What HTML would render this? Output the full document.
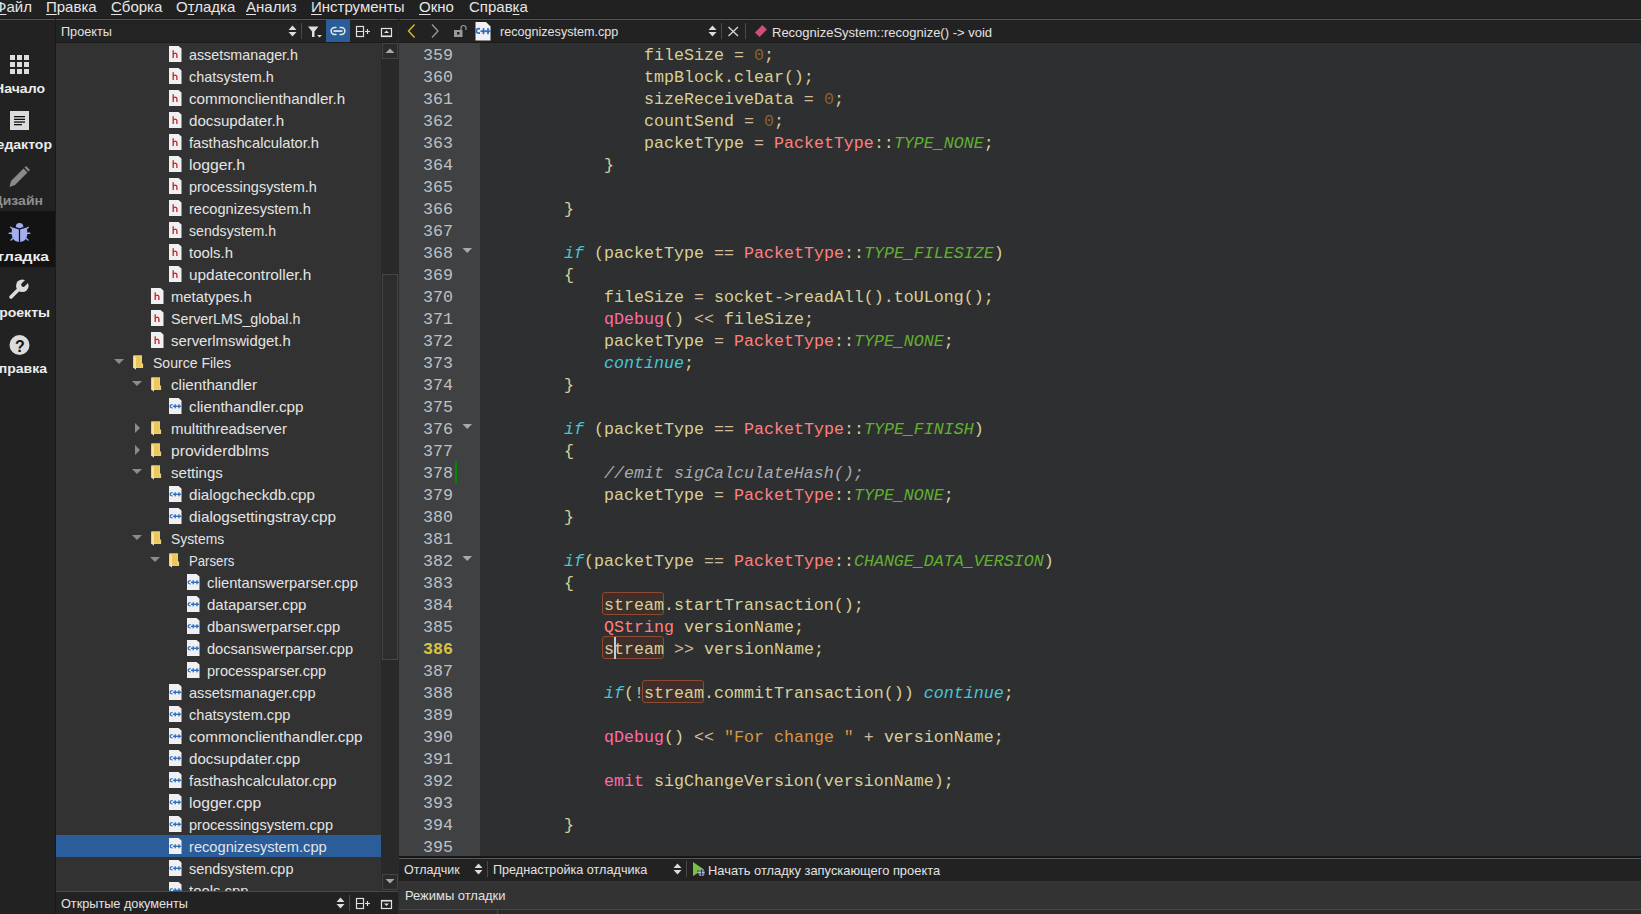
<!DOCTYPE html><html><head><meta charset="utf-8"><style>
*{margin:0;padding:0;box-sizing:border-box}
html,body{width:1641px;height:914px;overflow:hidden;background:#212121;font-family:"Liberation Sans",sans-serif;color:#e0e0e0;position:relative}
.a{position:absolute}
.ui{font-size:12.7px;color:#e2e2e2;white-space:nowrap;line-height:15px}
.menu span{position:absolute;top:-2px;font-size:15px;line-height:18px;color:#e6e6e6;white-space:nowrap}
.menu u{text-decoration:underline;text-decoration-thickness:1px;text-underline-offset:1.5px}
.mlabel{position:absolute;font-weight:bold;font-size:13px;line-height:15px;color:#ececec;white-space:nowrap;text-align:right;width:100px;transform:scaleX(1.08);transform-origin:100% 50%}
.row{position:absolute;left:0;width:325px;height:22px;font-size:14.6px;color:#e4e4e4;white-space:nowrap}
.row .t{position:absolute;top:4px;line-height:17px}
#code,#lnums{font-family:"Liberation Mono",monospace;font-size:16.667px;line-height:22px;white-space:pre}
#code{position:absolute;left:85px;top:2px;color:#d6cf9a}
#lnums{position:absolute;left:0;top:2px;width:54px;text-align:right;color:#bec0c2}
.f{color:#d6cf9a}
.op{color:#d6bb9a}
.n{color:#8a602c}
.ty{color:#ff8080}
.en{color:#62b032;font-style:italic}
.kw{color:#45c6d6;font-style:italic}
.mc{color:#ff6aad}
.st{color:#d69545}
.cm{color:#a8abb0;font-style:italic}
.occ{position:absolute;border:1px solid #8c4a33;background:#3f2f2b;border-radius:3px}
</style></head><body><div class="a menu" style="left:0;top:0;width:1641px;height:19px;background:#212121">
<span style="left:-5px"><u>Ф</u>айл</span>
<span style="left:46px"><u>П</u>равка</span>
<span style="left:111px"><u>С</u>борка</span>
<span style="left:176px">О<u>т</u>ладка</span>
<span style="left:246px"><u>А</u>нализ</span>
<span style="left:311px"><u>И</u>нструменты</span>
<span style="left:419px"><u>О</u>кно</span>
<span style="left:469px">Справ<u>к</u>а</span>
</div>
<div class="a" style="left:0;top:20px;width:55px;height:894px;background:#222222"></div>
<div class="a" style="left:55px;top:20px;width:1px;height:894px;background:#1a1a1a"></div>
<div class="a" style="left:0;top:211px;width:55px;height:56px;background:#131313"></div>
<div class="mlabel" style="top:81px;left:-55px;color:#ececec;transform:scaleX(1.08)">Начало</div>
<div class="mlabel" style="top:137px;left:-48px;color:#ececec;transform:scaleX(1.08)">Редактор</div>
<div class="mlabel" style="top:193px;left:-57px;color:#8e8e8e;transform:scaleX(1.08)">Дизайн</div>
<div class="mlabel" style="top:249px;left:-51.4px;color:#ececec;transform:scaleX(1.2)">Отладка</div>
<div class="mlabel" style="top:305px;left:-50px;color:#ececec;transform:scaleX(1.08)">Проекты</div>
<div class="mlabel" style="top:361px;left:-52.7px;color:#ececec;transform:scaleX(1.08)">Справка</div>
<svg class="a" style="left:0;top:0" width="56" height="400"><rect x="10" y="55" width="5" height="5" fill="#dedede"/><rect x="17" y="55" width="5" height="5" fill="#dedede"/><rect x="24" y="55" width="5" height="5" fill="#dedede"/><rect x="10" y="62" width="5" height="5" fill="#dedede"/><rect x="17" y="62" width="5" height="5" fill="#dedede"/><rect x="24" y="62" width="5" height="5" fill="#dedede"/><rect x="10" y="69" width="5" height="5" fill="#dedede"/><rect x="17" y="69" width="5" height="5" fill="#dedede"/><rect x="24" y="69" width="5" height="5" fill="#dedede"/><rect x="10" y="111" width="19" height="19" fill="#dcdcdc"/><rect x="14" y="116" width="11" height="1.3" fill="#111"/><rect x="14" y="118.7" width="11" height="1.3" fill="#111"/><rect x="14" y="121.4" width="11" height="1.3" fill="#111"/><rect x="14" y="124" width="8" height="1.3" fill="#111"/><path d="M9.5 187 L11 181 L23.5 168.5 L27.5 172.5 L15 185 Z" fill="#8a8a8a"/><path d="M24.5 167.5 L26 166 L30 170 L28.5 171.5 Z" fill="#8a8a8a"/><path d="M15.8 227 Q15.8 223 19.5 223 Q23.3 223 23.3 227 L19.5 228.3 Z" fill="#a3aef0"/><path d="M12.6 227.6 L18.9 229.6 L18.9 242 Q12.3 241 11.7 234.5 Q11.6 229 12.6 227.6 Z" fill="#a3aef0"/><path d="M26.4 227.6 L20.1 229.6 L20.1 242 Q26.7 241 27.3 234.5 Q27.4 229 26.4 227.6 Z" fill="#a3aef0"/><path d="M10.8 227.2 L13 229.3 M9.2 233.3 L12.5 233.3 M11 240 L13.3 238 M28.2 227.2 L26 229.3 M29.8 233.3 L26.5 233.3 M28 240 L25.7 238" stroke="#a3aef0" stroke-width="1.4" stroke-linecap="round"/><path d="M11 297 L19 289" stroke="#dcdcdc" stroke-width="3.6" stroke-linecap="round"/><circle cx="22.3" cy="285.7" r="6.3" fill="#dcdcdc"/><path d="M23.3 284.7 L29.5 278.5" stroke="#222222" stroke-width="4.2" stroke-linecap="round"/><circle cx="19.5" cy="345" r="10" fill="#dcdcdc"/><text x="19.8" y="351.5" text-anchor="middle" font-family="Liberation Sans" font-weight="bold" font-size="16" fill="#141414">?</text></svg>
<div class="a" style="left:56px;top:20px;width:342px;height:22px;background:#232323"></div>
<div class="a ui" style="left:61px;top:25px">Проекты</div>
<svg class="a" style="left:0;top:0" width="1641" height="50"><path d="M288.5 30.0 L292.5 25.5 L296.5 30.0 Z M288.5 32.0 L292.5 36.5 L296.5 32.0 Z" fill="#dcdcdc"/><rect x="301" y="23" width="1" height="16" fill="#4a4a4a"/><path d="M308 26.5 L318.5 26.5 L314.5 31.5 L314.5 37 L312 37 L312 31.5 Z" fill="#dedede"/><path d="M317 35 L322 35 L319.5 37.5 Z" fill="#dedede"/><rect x="326" y="20" width="24" height="22" fill="#2a5d9a"/><path d="M336.5 27.6 L334.6 27.6 A3.45 3.45 0 0 0 334.6 34.5 L336.5 34.5 M339.5 27.6 L341.4 27.6 A3.45 3.45 0 0 1 341.4 34.5 L339.5 34.5" stroke="#e8e8e8" stroke-width="1.5" fill="none"/><rect x="333.5" y="30.2" width="9" height="1.7" fill="#e8e8e8"/><rect x="356.5" y="26.5" width="7" height="10" stroke="#dedede" stroke-width="1.2" fill="none"/><rect x="356" y="31" width="8" height="1" fill="#dedede"/><path d="M365 31.5 L370 31.5 M367.5 29 L367.5 34" stroke="#dedede" stroke-width="1.2"/><rect x="381.5" y="28.5" width="10" height="8" stroke="#e2e2e2" stroke-width="1.2" fill="none"/><rect x="381" y="35.5" width="11" height="1.5" fill="#e2e2e2"/><path d="M384 33 L386.5 30.5 L389 33 Z" fill="#e2e2e2"/></svg>
<div class="a" style="left:56px;top:42px;width:342px;height:1px;background:#1c1c1c"></div>
<div class="a" style="left:56px;top:43px;width:325px;height:848px;background:#323232;overflow:hidden">
<div class="a" style="left:0;top:792px;width:325px;height:22px;background:#2a5d9a"></div>
<div class="row" style="top:0px"><span class="t" style="left:133px;transform:scaleX(0.9809);transform-origin:0 50%">assetsmanager.h</span></div>
<div class="row" style="top:22px"><span class="t" style="left:133px;transform:scaleX(0.9869);transform-origin:0 50%">chatsystem.h</span></div>
<div class="row" style="top:44px"><span class="t" style="left:133px;transform:scaleX(1.0409);transform-origin:0 50%">commonclienthandler.h</span></div>
<div class="row" style="top:66px"><span class="t" style="left:133px;transform:scaleX(1.0367);transform-origin:0 50%">docsupdater.h</span></div>
<div class="row" style="top:88px"><span class="t" style="left:133px;transform:scaleX(1.0078);transform-origin:0 50%">fasthashcalculator.h</span></div>
<div class="row" style="top:110px"><span class="t" style="left:133px;transform:scaleX(1.0796);transform-origin:0 50%">logger.h</span></div>
<div class="row" style="top:132px"><span class="t" style="left:133px;transform:scaleX(0.9905);transform-origin:0 50%">processingsystem.h</span></div>
<div class="row" style="top:154px"><span class="t" style="left:133px;transform:scaleX(1.0008);transform-origin:0 50%">recognizesystem.h</span></div>
<div class="row" style="top:176px"><span class="t" style="left:133px;transform:scaleX(0.9663);transform-origin:0 50%">sendsystem.h</span></div>
<div class="row" style="top:198px"><span class="t" style="left:133px;transform:scaleX(1.0238);transform-origin:0 50%">tools.h</span></div>
<div class="row" style="top:220px"><span class="t" style="left:133px;transform:scaleX(1.0544);transform-origin:0 50%">updatecontroller.h</span></div>
<div class="row" style="top:242px"><span class="t" style="left:115px;transform:scaleX(1.0143);transform-origin:0 50%">metatypes.h</span></div>
<div class="row" style="top:264px"><span class="t" style="left:115px;transform:scaleX(0.9785);transform-origin:0 50%">ServerLMS_global.h</span></div>
<div class="row" style="top:286px"><span class="t" style="left:115px;transform:scaleX(1.0181);transform-origin:0 50%">serverlmswidget.h</span></div>
<div class="row" style="top:308px"><span class="t" style="left:97px;transform:scaleX(0.962);transform-origin:0 50%">Source Files</span></div>
<div class="row" style="top:330px"><span class="t" style="left:115px;transform:scaleX(1.039);transform-origin:0 50%">clienthandler</span></div>
<div class="row" style="top:352px"><span class="t" style="left:133px;transform:scaleX(1.0454);transform-origin:0 50%">clienthandler.cpp</span></div>
<div class="row" style="top:374px"><span class="t" style="left:115px;transform:scaleX(1.0279);transform-origin:0 50%">multithreadserver</span></div>
<div class="row" style="top:396px"><span class="t" style="left:115px;transform:scaleX(1.0697);transform-origin:0 50%">providerdblms</span></div>
<div class="row" style="top:418px"><span class="t" style="left:115px;transform:scaleX(1.0306);transform-origin:0 50%">settings</span></div>
<div class="row" style="top:440px"><span class="t" style="left:133px;transform:scaleX(1.0425);transform-origin:0 50%">dialogcheckdb.cpp</span></div>
<div class="row" style="top:462px"><span class="t" style="left:133px;transform:scaleX(1.0489);transform-origin:0 50%">dialogsettingstray.cpp</span></div>
<div class="row" style="top:484px"><span class="t" style="left:115px;transform:scaleX(0.95);transform-origin:0 50%">Systems</span></div>
<div class="row" style="top:506px"><span class="t" style="left:133px;transform:scaleX(0.9021);transform-origin:0 50%">Parsers</span></div>
<div class="row" style="top:528px"><span class="t" style="left:151px;transform:scaleX(1.0115);transform-origin:0 50%">clientanswerparser.cpp</span></div>
<div class="row" style="top:550px"><span class="t" style="left:151px;transform:scaleX(1.0295);transform-origin:0 50%">dataparser.cpp</span></div>
<div class="row" style="top:572px"><span class="t" style="left:151px;transform:scaleX(1.0131);transform-origin:0 50%">dbanswerparser.cpp</span></div>
<div class="row" style="top:594px"><span class="t" style="left:151px;transform:scaleX(1.0007);transform-origin:0 50%">docsanswerparser.cpp</span></div>
<div class="row" style="top:616px"><span class="t" style="left:151px;transform:scaleX(0.9991);transform-origin:0 50%">processparser.cpp</span></div>
<div class="row" style="top:638px"><span class="t" style="left:133px;transform:scaleX(1.0);transform-origin:0 50%">assetsmanager.cpp</span></div>
<div class="row" style="top:660px"><span class="t" style="left:133px;transform:scaleX(1.0);transform-origin:0 50%">chatsystem.cpp</span></div>
<div class="row" style="top:682px"><span class="t" style="left:133px;transform:scaleX(1.0482);transform-origin:0 50%">commonclienthandler.cpp</span></div>
<div class="row" style="top:704px"><span class="t" style="left:133px;transform:scaleX(1.0377);transform-origin:0 50%">docsupdater.cpp</span></div>
<div class="row" style="top:726px"><span class="t" style="left:133px;transform:scaleX(1.0217);transform-origin:0 50%">fasthashcalculator.cpp</span></div>
<div class="row" style="top:748px"><span class="t" style="left:133px;transform:scaleX(1.0723);transform-origin:0 50%">logger.cpp</span></div>
<div class="row" style="top:770px"><span class="t" style="left:133px;transform:scaleX(0.9972);transform-origin:0 50%">processingsystem.cpp</span></div>
<div class="row" style="top:792px"><span class="t" style="left:133px;transform:scaleX(1.0044);transform-origin:0 50%">recognizesystem.cpp</span></div>
<div class="row" style="top:814px"><span class="t" style="left:133px;transform:scaleX(0.9904);transform-origin:0 50%">sendsystem.cpp</span></div>
<div class="row" style="top:836px"><span class="t" style="left:133px;transform:scaleX(1.02);transform-origin:0 50%">tools.cpp</span></div>
<svg class="a" style="left:0;top:0" width="325" height="880"><g transform="translate(113,3)"><path d="M0 0 L9.5 0 L12.5 2.5 L12.5 16 L0 16 Z" fill="#f0f0f2"/><path d="M4.2 4.3 L4.2 12 M4.2 8.3 Q5 7.1 6.4 7.1 Q7.9 7.2 7.9 9 L7.9 12" stroke="#c62a2a" stroke-width="1.35" fill="none"/></g><g transform="translate(113,25)"><path d="M0 0 L9.5 0 L12.5 2.5 L12.5 16 L0 16 Z" fill="#f0f0f2"/><path d="M4.2 4.3 L4.2 12 M4.2 8.3 Q5 7.1 6.4 7.1 Q7.9 7.2 7.9 9 L7.9 12" stroke="#c62a2a" stroke-width="1.35" fill="none"/></g><g transform="translate(113,47)"><path d="M0 0 L9.5 0 L12.5 2.5 L12.5 16 L0 16 Z" fill="#f0f0f2"/><path d="M4.2 4.3 L4.2 12 M4.2 8.3 Q5 7.1 6.4 7.1 Q7.9 7.2 7.9 9 L7.9 12" stroke="#c62a2a" stroke-width="1.35" fill="none"/></g><g transform="translate(113,69)"><path d="M0 0 L9.5 0 L12.5 2.5 L12.5 16 L0 16 Z" fill="#f0f0f2"/><path d="M4.2 4.3 L4.2 12 M4.2 8.3 Q5 7.1 6.4 7.1 Q7.9 7.2 7.9 9 L7.9 12" stroke="#c62a2a" stroke-width="1.35" fill="none"/></g><g transform="translate(113,91)"><path d="M0 0 L9.5 0 L12.5 2.5 L12.5 16 L0 16 Z" fill="#f0f0f2"/><path d="M4.2 4.3 L4.2 12 M4.2 8.3 Q5 7.1 6.4 7.1 Q7.9 7.2 7.9 9 L7.9 12" stroke="#c62a2a" stroke-width="1.35" fill="none"/></g><g transform="translate(113,113)"><path d="M0 0 L9.5 0 L12.5 2.5 L12.5 16 L0 16 Z" fill="#f0f0f2"/><path d="M4.2 4.3 L4.2 12 M4.2 8.3 Q5 7.1 6.4 7.1 Q7.9 7.2 7.9 9 L7.9 12" stroke="#c62a2a" stroke-width="1.35" fill="none"/></g><g transform="translate(113,135)"><path d="M0 0 L9.5 0 L12.5 2.5 L12.5 16 L0 16 Z" fill="#f0f0f2"/><path d="M4.2 4.3 L4.2 12 M4.2 8.3 Q5 7.1 6.4 7.1 Q7.9 7.2 7.9 9 L7.9 12" stroke="#c62a2a" stroke-width="1.35" fill="none"/></g><g transform="translate(113,157)"><path d="M0 0 L9.5 0 L12.5 2.5 L12.5 16 L0 16 Z" fill="#f0f0f2"/><path d="M4.2 4.3 L4.2 12 M4.2 8.3 Q5 7.1 6.4 7.1 Q7.9 7.2 7.9 9 L7.9 12" stroke="#c62a2a" stroke-width="1.35" fill="none"/></g><g transform="translate(113,179)"><path d="M0 0 L9.5 0 L12.5 2.5 L12.5 16 L0 16 Z" fill="#f0f0f2"/><path d="M4.2 4.3 L4.2 12 M4.2 8.3 Q5 7.1 6.4 7.1 Q7.9 7.2 7.9 9 L7.9 12" stroke="#c62a2a" stroke-width="1.35" fill="none"/></g><g transform="translate(113,201)"><path d="M0 0 L9.5 0 L12.5 2.5 L12.5 16 L0 16 Z" fill="#f0f0f2"/><path d="M4.2 4.3 L4.2 12 M4.2 8.3 Q5 7.1 6.4 7.1 Q7.9 7.2 7.9 9 L7.9 12" stroke="#c62a2a" stroke-width="1.35" fill="none"/></g><g transform="translate(113,223)"><path d="M0 0 L9.5 0 L12.5 2.5 L12.5 16 L0 16 Z" fill="#f0f0f2"/><path d="M4.2 4.3 L4.2 12 M4.2 8.3 Q5 7.1 6.4 7.1 Q7.9 7.2 7.9 9 L7.9 12" stroke="#c62a2a" stroke-width="1.35" fill="none"/></g><g transform="translate(95,245)"><path d="M0 0 L9.5 0 L12.5 2.5 L12.5 16 L0 16 Z" fill="#f0f0f2"/><path d="M4.2 4.3 L4.2 12 M4.2 8.3 Q5 7.1 6.4 7.1 Q7.9 7.2 7.9 9 L7.9 12" stroke="#c62a2a" stroke-width="1.35" fill="none"/></g><g transform="translate(95,267)"><path d="M0 0 L9.5 0 L12.5 2.5 L12.5 16 L0 16 Z" fill="#f0f0f2"/><path d="M4.2 4.3 L4.2 12 M4.2 8.3 Q5 7.1 6.4 7.1 Q7.9 7.2 7.9 9 L7.9 12" stroke="#c62a2a" stroke-width="1.35" fill="none"/></g><g transform="translate(95,289)"><path d="M0 0 L9.5 0 L12.5 2.5 L12.5 16 L0 16 Z" fill="#f0f0f2"/><path d="M4.2 4.3 L4.2 12 M4.2 8.3 Q5 7.1 6.4 7.1 Q7.9 7.2 7.9 9 L7.9 12" stroke="#c62a2a" stroke-width="1.35" fill="none"/></g><g transform="translate(77,312)"><path d="M0.3 0.2 L9 0.2 L9 8.4 L10.1 8.4 L10.1 13 L0.3 13 Z" fill="#f0d068"/><path d="M3 1.5 L8 1.5 L8 12 L3 12 Z" fill="#e9c95e"/><path d="M0.3 1 L3 2.5 L3 14.7 L0.3 12.5 Z" fill="#fae39a"/></g><path d="M58 316 L68 316 L63 321 Z" fill="#8c8c8c"/><g transform="translate(95,334)"><path d="M0.3 0.2 L9 0.2 L9 8.4 L10.1 8.4 L10.1 13 L0.3 13 Z" fill="#f0d068"/><path d="M3 1.5 L8 1.5 L8 12 L3 12 Z" fill="#e9c95e"/><path d="M0.3 1 L3 2.5 L3 14.7 L0.3 12.5 Z" fill="#fae39a"/></g><path d="M76 338 L86 338 L81 343 Z" fill="#8c8c8c"/><g transform="translate(113,355)"><path d="M0 0 L9.5 0 L12.5 2.5 L12.5 16 L0 16 Z" fill="#f0f0f2"/><path d="M3.6 6.7 Q1.2 6.5 1.2 8.3 Q1.2 10 3.6 9.9" stroke="#2f6fbf" stroke-width="1.3" fill="none"/><rect x="4" y="7.6" width="8" height="1.4" fill="#2f6fbf"/><rect x="5.5" y="6.3" width="1.4" height="4" fill="#2f6fbf"/><rect x="9.3" y="6.3" width="1.4" height="4" fill="#2f6fbf"/></g><g transform="translate(95,378)"><path d="M0.3 0.2 L9 0.2 L9 8.4 L10.1 8.4 L10.1 13 L0.3 13 Z" fill="#f0d068"/><path d="M3 1.5 L8 1.5 L8 12 L3 12 Z" fill="#e9c95e"/><path d="M0.3 1 L3 2.5 L3 14.7 L0.3 12.5 Z" fill="#fae39a"/></g><path d="M79 380 L84 385 L79 390 Z" fill="#8c8c8c"/><g transform="translate(95,400)"><path d="M0.3 0.2 L9 0.2 L9 8.4 L10.1 8.4 L10.1 13 L0.3 13 Z" fill="#f0d068"/><path d="M3 1.5 L8 1.5 L8 12 L3 12 Z" fill="#e9c95e"/><path d="M0.3 1 L3 2.5 L3 14.7 L0.3 12.5 Z" fill="#fae39a"/></g><path d="M79 402 L84 407 L79 412 Z" fill="#8c8c8c"/><g transform="translate(95,422)"><path d="M0.3 0.2 L9 0.2 L9 8.4 L10.1 8.4 L10.1 13 L0.3 13 Z" fill="#f0d068"/><path d="M3 1.5 L8 1.5 L8 12 L3 12 Z" fill="#e9c95e"/><path d="M0.3 1 L3 2.5 L3 14.7 L0.3 12.5 Z" fill="#fae39a"/></g><path d="M76 426 L86 426 L81 431 Z" fill="#8c8c8c"/><g transform="translate(113,443)"><path d="M0 0 L9.5 0 L12.5 2.5 L12.5 16 L0 16 Z" fill="#f0f0f2"/><path d="M3.6 6.7 Q1.2 6.5 1.2 8.3 Q1.2 10 3.6 9.9" stroke="#2f6fbf" stroke-width="1.3" fill="none"/><rect x="4" y="7.6" width="8" height="1.4" fill="#2f6fbf"/><rect x="5.5" y="6.3" width="1.4" height="4" fill="#2f6fbf"/><rect x="9.3" y="6.3" width="1.4" height="4" fill="#2f6fbf"/></g><g transform="translate(113,465)"><path d="M0 0 L9.5 0 L12.5 2.5 L12.5 16 L0 16 Z" fill="#f0f0f2"/><path d="M3.6 6.7 Q1.2 6.5 1.2 8.3 Q1.2 10 3.6 9.9" stroke="#2f6fbf" stroke-width="1.3" fill="none"/><rect x="4" y="7.6" width="8" height="1.4" fill="#2f6fbf"/><rect x="5.5" y="6.3" width="1.4" height="4" fill="#2f6fbf"/><rect x="9.3" y="6.3" width="1.4" height="4" fill="#2f6fbf"/></g><g transform="translate(95,488)"><path d="M0.3 0.2 L9 0.2 L9 8.4 L10.1 8.4 L10.1 13 L0.3 13 Z" fill="#f0d068"/><path d="M3 1.5 L8 1.5 L8 12 L3 12 Z" fill="#e9c95e"/><path d="M0.3 1 L3 2.5 L3 14.7 L0.3 12.5 Z" fill="#fae39a"/></g><path d="M76 492 L86 492 L81 497 Z" fill="#8c8c8c"/><g transform="translate(113,510)"><path d="M0.3 0.2 L9 0.2 L9 8.4 L10.1 8.4 L10.1 13 L0.3 13 Z" fill="#f0d068"/><path d="M3 1.5 L8 1.5 L8 12 L3 12 Z" fill="#e9c95e"/><path d="M0.3 1 L3 2.5 L3 14.7 L0.3 12.5 Z" fill="#fae39a"/></g><path d="M94 514 L104 514 L99 519 Z" fill="#8c8c8c"/><g transform="translate(131,531)"><path d="M0 0 L9.5 0 L12.5 2.5 L12.5 16 L0 16 Z" fill="#f0f0f2"/><path d="M3.6 6.7 Q1.2 6.5 1.2 8.3 Q1.2 10 3.6 9.9" stroke="#2f6fbf" stroke-width="1.3" fill="none"/><rect x="4" y="7.6" width="8" height="1.4" fill="#2f6fbf"/><rect x="5.5" y="6.3" width="1.4" height="4" fill="#2f6fbf"/><rect x="9.3" y="6.3" width="1.4" height="4" fill="#2f6fbf"/></g><g transform="translate(131,553)"><path d="M0 0 L9.5 0 L12.5 2.5 L12.5 16 L0 16 Z" fill="#f0f0f2"/><path d="M3.6 6.7 Q1.2 6.5 1.2 8.3 Q1.2 10 3.6 9.9" stroke="#2f6fbf" stroke-width="1.3" fill="none"/><rect x="4" y="7.6" width="8" height="1.4" fill="#2f6fbf"/><rect x="5.5" y="6.3" width="1.4" height="4" fill="#2f6fbf"/><rect x="9.3" y="6.3" width="1.4" height="4" fill="#2f6fbf"/></g><g transform="translate(131,575)"><path d="M0 0 L9.5 0 L12.5 2.5 L12.5 16 L0 16 Z" fill="#f0f0f2"/><path d="M3.6 6.7 Q1.2 6.5 1.2 8.3 Q1.2 10 3.6 9.9" stroke="#2f6fbf" stroke-width="1.3" fill="none"/><rect x="4" y="7.6" width="8" height="1.4" fill="#2f6fbf"/><rect x="5.5" y="6.3" width="1.4" height="4" fill="#2f6fbf"/><rect x="9.3" y="6.3" width="1.4" height="4" fill="#2f6fbf"/></g><g transform="translate(131,597)"><path d="M0 0 L9.5 0 L12.5 2.5 L12.5 16 L0 16 Z" fill="#f0f0f2"/><path d="M3.6 6.7 Q1.2 6.5 1.2 8.3 Q1.2 10 3.6 9.9" stroke="#2f6fbf" stroke-width="1.3" fill="none"/><rect x="4" y="7.6" width="8" height="1.4" fill="#2f6fbf"/><rect x="5.5" y="6.3" width="1.4" height="4" fill="#2f6fbf"/><rect x="9.3" y="6.3" width="1.4" height="4" fill="#2f6fbf"/></g><g transform="translate(131,619)"><path d="M0 0 L9.5 0 L12.5 2.5 L12.5 16 L0 16 Z" fill="#f0f0f2"/><path d="M3.6 6.7 Q1.2 6.5 1.2 8.3 Q1.2 10 3.6 9.9" stroke="#2f6fbf" stroke-width="1.3" fill="none"/><rect x="4" y="7.6" width="8" height="1.4" fill="#2f6fbf"/><rect x="5.5" y="6.3" width="1.4" height="4" fill="#2f6fbf"/><rect x="9.3" y="6.3" width="1.4" height="4" fill="#2f6fbf"/></g><g transform="translate(113,641)"><path d="M0 0 L9.5 0 L12.5 2.5 L12.5 16 L0 16 Z" fill="#f0f0f2"/><path d="M3.6 6.7 Q1.2 6.5 1.2 8.3 Q1.2 10 3.6 9.9" stroke="#2f6fbf" stroke-width="1.3" fill="none"/><rect x="4" y="7.6" width="8" height="1.4" fill="#2f6fbf"/><rect x="5.5" y="6.3" width="1.4" height="4" fill="#2f6fbf"/><rect x="9.3" y="6.3" width="1.4" height="4" fill="#2f6fbf"/></g><g transform="translate(113,663)"><path d="M0 0 L9.5 0 L12.5 2.5 L12.5 16 L0 16 Z" fill="#f0f0f2"/><path d="M3.6 6.7 Q1.2 6.5 1.2 8.3 Q1.2 10 3.6 9.9" stroke="#2f6fbf" stroke-width="1.3" fill="none"/><rect x="4" y="7.6" width="8" height="1.4" fill="#2f6fbf"/><rect x="5.5" y="6.3" width="1.4" height="4" fill="#2f6fbf"/><rect x="9.3" y="6.3" width="1.4" height="4" fill="#2f6fbf"/></g><g transform="translate(113,685)"><path d="M0 0 L9.5 0 L12.5 2.5 L12.5 16 L0 16 Z" fill="#f0f0f2"/><path d="M3.6 6.7 Q1.2 6.5 1.2 8.3 Q1.2 10 3.6 9.9" stroke="#2f6fbf" stroke-width="1.3" fill="none"/><rect x="4" y="7.6" width="8" height="1.4" fill="#2f6fbf"/><rect x="5.5" y="6.3" width="1.4" height="4" fill="#2f6fbf"/><rect x="9.3" y="6.3" width="1.4" height="4" fill="#2f6fbf"/></g><g transform="translate(113,707)"><path d="M0 0 L9.5 0 L12.5 2.5 L12.5 16 L0 16 Z" fill="#f0f0f2"/><path d="M3.6 6.7 Q1.2 6.5 1.2 8.3 Q1.2 10 3.6 9.9" stroke="#2f6fbf" stroke-width="1.3" fill="none"/><rect x="4" y="7.6" width="8" height="1.4" fill="#2f6fbf"/><rect x="5.5" y="6.3" width="1.4" height="4" fill="#2f6fbf"/><rect x="9.3" y="6.3" width="1.4" height="4" fill="#2f6fbf"/></g><g transform="translate(113,729)"><path d="M0 0 L9.5 0 L12.5 2.5 L12.5 16 L0 16 Z" fill="#f0f0f2"/><path d="M3.6 6.7 Q1.2 6.5 1.2 8.3 Q1.2 10 3.6 9.9" stroke="#2f6fbf" stroke-width="1.3" fill="none"/><rect x="4" y="7.6" width="8" height="1.4" fill="#2f6fbf"/><rect x="5.5" y="6.3" width="1.4" height="4" fill="#2f6fbf"/><rect x="9.3" y="6.3" width="1.4" height="4" fill="#2f6fbf"/></g><g transform="translate(113,751)"><path d="M0 0 L9.5 0 L12.5 2.5 L12.5 16 L0 16 Z" fill="#f0f0f2"/><path d="M3.6 6.7 Q1.2 6.5 1.2 8.3 Q1.2 10 3.6 9.9" stroke="#2f6fbf" stroke-width="1.3" fill="none"/><rect x="4" y="7.6" width="8" height="1.4" fill="#2f6fbf"/><rect x="5.5" y="6.3" width="1.4" height="4" fill="#2f6fbf"/><rect x="9.3" y="6.3" width="1.4" height="4" fill="#2f6fbf"/></g><g transform="translate(113,773)"><path d="M0 0 L9.5 0 L12.5 2.5 L12.5 16 L0 16 Z" fill="#f0f0f2"/><path d="M3.6 6.7 Q1.2 6.5 1.2 8.3 Q1.2 10 3.6 9.9" stroke="#2f6fbf" stroke-width="1.3" fill="none"/><rect x="4" y="7.6" width="8" height="1.4" fill="#2f6fbf"/><rect x="5.5" y="6.3" width="1.4" height="4" fill="#2f6fbf"/><rect x="9.3" y="6.3" width="1.4" height="4" fill="#2f6fbf"/></g><g transform="translate(113,795)"><path d="M0 0 L9.5 0 L12.5 2.5 L12.5 16 L0 16 Z" fill="#f0f0f2"/><path d="M3.6 6.7 Q1.2 6.5 1.2 8.3 Q1.2 10 3.6 9.9" stroke="#2f6fbf" stroke-width="1.3" fill="none"/><rect x="4" y="7.6" width="8" height="1.4" fill="#2f6fbf"/><rect x="5.5" y="6.3" width="1.4" height="4" fill="#2f6fbf"/><rect x="9.3" y="6.3" width="1.4" height="4" fill="#2f6fbf"/></g><g transform="translate(113,817)"><path d="M0 0 L9.5 0 L12.5 2.5 L12.5 16 L0 16 Z" fill="#f0f0f2"/><path d="M3.6 6.7 Q1.2 6.5 1.2 8.3 Q1.2 10 3.6 9.9" stroke="#2f6fbf" stroke-width="1.3" fill="none"/><rect x="4" y="7.6" width="8" height="1.4" fill="#2f6fbf"/><rect x="5.5" y="6.3" width="1.4" height="4" fill="#2f6fbf"/><rect x="9.3" y="6.3" width="1.4" height="4" fill="#2f6fbf"/></g><g transform="translate(113,839)"><path d="M0 0 L9.5 0 L12.5 2.5 L12.5 16 L0 16 Z" fill="#f0f0f2"/><path d="M3.6 6.7 Q1.2 6.5 1.2 8.3 Q1.2 10 3.6 9.9" stroke="#2f6fbf" stroke-width="1.3" fill="none"/><rect x="4" y="7.6" width="8" height="1.4" fill="#2f6fbf"/><rect x="5.5" y="6.3" width="1.4" height="4" fill="#2f6fbf"/><rect x="9.3" y="6.3" width="1.4" height="4" fill="#2f6fbf"/></g></svg>
</div>
<div class="a" style="left:381px;top:43px;width:17px;height:848px;background:#292929"></div>
<div class="a" style="left:382px;top:43px;width:16px;height:16px;border:1px solid #444;background:#2b2b2b"></div>
<div class="a" style="left:382px;top:274px;width:16px;height:386px;border:1px solid #464646;background:#2d2d2d"></div>
<div class="a" style="left:382px;top:874px;width:16px;height:16px;border:1px solid #444;background:#2b2b2b"></div>
<svg class="a" style="left:0;top:0" width="400" height="914"><path d="M385.5 53 L390 48.5 L394.5 53 Z" fill="#a8a8a8"/><path d="M385.5 879 L390 883.5 L394.5 879 Z" fill="#a8a8a8"/></svg>
<div class="a" style="left:56px;top:891px;width:342px;height:1px;background:#4a4a4a"></div>
<div class="a" style="left:56px;top:892px;width:342px;height:22px;background:#222222"></div>
<div class="a ui" style="left:61px;top:897px">Открытые документы</div>
<svg class="a" style="left:0;top:0" width="400" height="914"><path d="M336.5 902.0 L340.5 897.5 L344.5 902.0 Z M336.5 904.0 L340.5 908.5 L344.5 904.0 Z" fill="#dcdcdc"/><rect x="349" y="895" width="1" height="16" fill="#4a4a4a"/><rect x="356.5" y="898.5" width="7" height="10" stroke="#dedede" stroke-width="1.2" fill="none"/><rect x="356" y="903" width="8" height="1" fill="#dedede"/><path d="M365 903.5 L370 903.5 M367.5 901 L367.5 906" stroke="#dedede" stroke-width="1.2"/><rect x="381.5" y="900.5" width="10" height="8" stroke="#e2e2e2" stroke-width="1.2" fill="none"/><rect x="381" y="900" width="11" height="1.5" fill="#e2e2e2"/><path d="M384 903.5 L386.5 906 L389 903.5 Z" fill="#e2e2e2"/></svg>
<div class="a" style="left:398px;top:20px;width:1px;height:894px;background:#2b2b2b"></div>
<div class="a" style="left:399px;top:20px;width:1242px;height:22px;background:#222222"></div>
<div class="a" style="left:399px;top:42px;width:1242px;height:1px;background:#1b1b1b"></div>
<div class="a ui" style="left:500px;top:25px;font-size:12.6px">recognizesystem.cpp</div>
<div class="a ui" style="left:772px;top:25px;font-size:13px">RecognizeSystem::recognize() -&gt; void</div>
<svg class="a" style="left:0;top:0" width="1100" height="45"><path d="M414.5 24.5 L408.5 31 L414.5 37.5" stroke="#e6c12a" stroke-width="1.3" fill="none"/><path d="M432 24.5 L438 31 L432 37.5" stroke="#9a9a9a" stroke-width="1.3" fill="none"/><rect x="454" y="30" width="8.5" height="7" fill="#9a9a9a"/><rect x="457" y="32" width="2.5" height="2.5" fill="#222"/><path d="M461 30 L461 28 A2.5 2.5 0 0 1 466 28 L466 30" stroke="#9a9a9a" stroke-width="1.2" fill="none"/><g transform="translate(475,21.5)"><path d="M0.5 0.5 L11 0.5 L15.5 5 L15.5 19 L0.5 19 Z" fill="#f2f2f4"/><path d="M5 7.3 Q1.3 6.8 1.3 9.5 Q1.3 12 5 11.5" stroke="#2f6fbf" stroke-width="1.8" fill="none"/><rect x="5.5" y="8.8" width="10" height="1.8" fill="#2f6fbf"/><rect x="7.6" y="6.7" width="1.8" height="6" fill="#2f6fbf"/><rect x="12.1" y="6.7" width="1.8" height="6" fill="#2f6fbf"/></g><path d="M708.5 30.0 L712.5 25.5 L716.5 30.0 Z M708.5 32.0 L712.5 36.5 L716.5 32.0 Z" fill="#dcdcdc"/><rect x="721" y="23" width="1" height="16" fill="#4a4a4a"/><path d="M728.5 27 L738 36 M738 27 L728.5 36" stroke="#d8d8d8" stroke-width="1.3"/><rect x="745" y="23" width="1" height="16" fill="#4a4a4a"/><path d="M762.4 25 L766.9 29.5 L759.5 37 L754.9 32.4 Z" fill="#d6497b"/></svg>
<div class="a" style="left:399px;top:43px;width:1242px;height:813px;background:#2e2f30;overflow:hidden">
<div class="a" style="left:0;top:0;width:81px;height:813px;background:#404142"></div>
<div class="occ" style="left:203px;top:549px;width:62px;height:23px"></div>
<div class="occ" style="left:203px;top:593px;width:62px;height:23px"></div>
<div class="occ" style="left:243px;top:637px;width:62px;height:23px"></div>
<div id="lnums">359
360
361
362
363
364
365
366
367
368
369
370
371
372
373
374
375
376
377
378
379
380
381
382
383
384
385
<b style="color:#d6c540">386</b>
387
388
389
390
391
392
393
394
395</div>
<div id="code">                <span class="f">fileSize</span><span class="op"> = </span><span class="n">0</span>;
                <span class="f">tmpBlock</span>.clear();
                <span class="f">sizeReceiveData</span><span class="op"> = </span><span class="n">0</span>;
                <span class="f">countSend</span><span class="op"> = </span><span class="n">0</span>;
                <span class="f">packetType</span><span class="op"> = </span><span class="ty">PacketType</span>::<span class="en">TYPE_NONE</span>;
            }

        }

        <span class="kw">if</span> (<span class="f">packetType</span><span class="op"> == </span><span class="ty">PacketType</span>::<span class="en">TYPE_FILESIZE</span>)
        {
            <span class="f">fileSize</span><span class="op"> = </span><span class="f">socket</span>->readAll().toULong();
            <span class="mc">qDebug</span>()<span class="op"> &lt;&lt; </span><span class="f">fileSize</span>;
            <span class="f">packetType</span><span class="op"> = </span><span class="ty">PacketType</span>::<span class="en">TYPE_NONE</span>;
            <span class="kw">continue</span>;
        }

        <span class="kw">if</span> (<span class="f">packetType</span><span class="op"> == </span><span class="ty">PacketType</span>::<span class="en">TYPE_FINISH</span>)
        {
            <span class="cm">//emit sigCalculateHash();</span>
            <span class="f">packetType</span><span class="op"> = </span><span class="ty">PacketType</span>::<span class="en">TYPE_NONE</span>;
        }

        <span class="kw">if</span>(<span class="f">packetType</span><span class="op"> == </span><span class="ty">PacketType</span>::<span class="en">CHANGE_DATA_VERSION</span>)
        {
            <span class="f">stream</span>.startTransaction();
            <span class="ty">QString</span> <span class="f">versionName</span>;
            <span class="f">stream</span><span class="op"> &gt;&gt; </span><span class="f">versionName</span>;

            <span class="kw">if</span>(<span class="op">!</span><span class="f">stream</span>.commitTransaction()) <span class="kw">continue</span>;

            <span class="mc">qDebug</span>()<span class="op"> &lt;&lt; </span><span class="st">"For change "</span><span class="op"> + </span><span class="f">versionName</span>;

            <span class="mc">emit</span> sigChangeVersion(<span class="f">versionName</span>);

        }
</div>
<svg class="a" style="left:0;top:0" width="100" height="813"><path d="M63.5 205 L73 205 L68.25 210 Z" fill="#a9a9a9"/><path d="M63.5 381 L73 381 L68.25 386 Z" fill="#a9a9a9"/><path d="M63.5 513 L73 513 L68.25 518 Z" fill="#a9a9a9"/><rect x="56" y="418" width="2" height="22" fill="#008a00"/></svg>
<div class="a" style="left:215px;top:594px;width:2px;height:22px;background:#b8d0e0"></div>
</div>
<div class="a" style="left:399px;top:856px;width:1242px;height:2px;background:#161616"></div>
<div class="a" style="left:399px;top:858px;width:1242px;height:1px;background:#575757"></div>
<div class="a" style="left:399px;top:859px;width:1242px;height:22px;background:#222222"></div>
<div class="a ui" style="left:404px;top:863px;font-size:12.5px">Отладчик</div>
<div class="a ui" style="left:493px;top:863px;font-size:12.65px">Преднастройка отладчика</div>
<div class="a ui" style="left:708px;top:863px;font-size:12.9px">Начать отладку запускающего проекта</div>
<svg class="a" style="left:0;top:0" width="1000" height="914"><path d="M474.5 868.0 L478.5 863.5 L482.5 868.0 Z M474.5 870.0 L478.5 874.5 L482.5 870.0 Z" fill="#dcdcdc"/><rect x="487" y="861" width="1" height="16" fill="#4a4a4a"/><path d="M673.5 868.0 L677.5 863.5 L681.5 868.0 Z M673.5 870.0 L677.5 874.5 L681.5 870.0 Z" fill="#dcdcdc"/><rect x="686" y="861" width="1" height="16" fill="#4a4a4a"/><path d="M693 862 L704 869.5 L693 876 Z" fill="#76c043"/><ellipse cx="701.5" cy="872.8" rx="3.2" ry="3.3" fill="#b8bdf0"/><path d="M697 871 L706 871 M697 874 L706 874 M701.5 869.5 L701.5 876.5" stroke="#222" stroke-width="0.8"/></svg>
<div class="a" style="left:399px;top:881px;width:1242px;height:28px;background:#333333"></div>
<div class="a ui" style="left:405px;top:888px;font-size:12.95px">Режимы отладки</div>
<div class="a" style="left:399px;top:909px;width:1242px;height:1px;background:#474747"></div>
<div class="a" style="left:399px;top:910px;width:1242px;height:4px;background:#2b2b2b"></div>
<div class="a" style="left:497px;top:909px;width:1px;height:5px;background:#474747"></div>
<div class="a" style="left:0;top:18px;width:1641px;height:1px;background:#1a1a1a"></div>
<div class="a" style="left:0;top:19px;width:1641px;height:1px;background:#575757"></div>
<div class="a" style="left:0;top:20px;width:326px;height:1px;background:#1e1e1e"></div>
<div class="a" style="left:350px;top:20px;width:1291px;height:1px;background:#1e1e1e"></div>
<div class="a" style="left:55px;top:19px;width:1px;height:2px;background:#1e1e1e"></div>
<div class="a" style="left:398px;top:19px;width:1px;height:2px;background:#1e1e1e"></div></body></html>
